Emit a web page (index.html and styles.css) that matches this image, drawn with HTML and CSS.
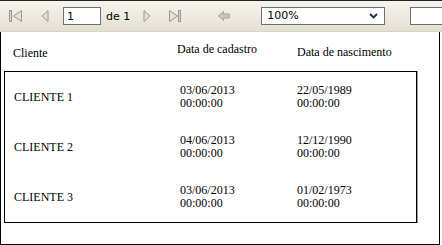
FILE: index.html
```html
<!DOCTYPE html>
<html>
<head>
<meta charset="utf-8">
<link rel="stylesheet" href="styles.css">
</head>
<body>
<div class="viewer">
  <div class="toolbar">
    <span class="btn btn-first"><svg width="14" height="14" viewBox="0 0 14 14"><rect x="0.5" y="1.5" width="2" height="11" fill="#d6d3c8" stroke="#9a9890"/><path d="M12.5 1.5 L4.5 7 L12.5 12.5 Z" fill="#e4e1d6" stroke="#9a9890"/></svg></span>
    <span class="btn btn-prev"><svg width="8" height="14" viewBox="0 0 8 14"><path d="M7 1.5 L1 7 L7 12.5 Z" fill="#e4e1d6" stroke="#9a9890"/></svg></span>
    <input class="page-input" type="text" value="1">
    <span class="of">de 1</span>
    <span class="btn btn-next"><svg width="8" height="14" viewBox="0 0 8 14"><path d="M1 1.5 L7 7 L1 12.5 Z" fill="#e4e1d6" stroke="#9a9890"/></svg></span>
    <span class="btn btn-last"><svg width="14" height="14" viewBox="0 0 14 14"><path d="M1.5 1.5 L9.5 7 L1.5 12.5 Z" fill="#e4e1d6" stroke="#9a9890"/><rect x="10.5" y="1.5" width="2" height="11" fill="#d6d3c8" stroke="#9a9890"/></svg></span>
    <span class="btn btn-back"><svg width="12" height="12" viewBox="0 0 12 12"><path d="M0.5 6 L5.5 1.5 L5.5 4 L11.5 4 L11.5 8 L5.5 8 L5.5 10.5 Z" fill="#c9c6bb" stroke="#a8a59c"/></svg></span>
    <span class="zoom-select"><span class="zoom-value">100%</span><svg class="chev" width="9" height="6" viewBox="0 0 9 6"><path d="M1 1 L4.5 4.5 L8 1" fill="none" stroke="#1c2a44" stroke-width="1.8"/></svg></span>
    <input class="find-input" type="text" value="">
  </div>
  <div class="report">
    <div class="head">
      <span class="h-cliente">Cliente</span>
      <span class="h-cad">Data de cadastro</span>
      <span class="h-nasc">Data de nascimento</span>
    </div>
    <div class="table">
      <div class="row">
        <span class="c-name">CLIENTE 1</span>
        <span class="c-date">03/06/2013<br>00:00:00</span>
        <span class="c-date">22/05/1989<br>00:00:00</span>
      </div>
      <div class="row">
        <span class="c-name">CLIENTE 2</span>
        <span class="c-date">04/06/2013<br>00:00:00</span>
        <span class="c-date">12/12/1990<br>00:00:00</span>
      </div>
      <div class="row">
        <span class="c-name">CLIENTE 3</span>
        <span class="c-date">03/06/2013<br>00:00:00</span>
        <span class="c-date">01/02/1973<br>00:00:00</span>
      </div>
    </div>
  </div>
</div>
</body>
</html>
```

FILE: styles.css
```css
html, body {
  margin: 0;
  padding: 0;
  background: #fff;
}
.viewer {
  width: 442px;
  height: 245px;
  overflow: hidden;
  font-family: "Liberation Serif", "Times New Roman", serif;
}
.toolbar {
  width: 442px;
  height: 30px;
  overflow: hidden;
  border-top: 1px solid #222;
  border-bottom: 1px solid #d8d5c8;
  background: linear-gradient(#f4f3ee, #ebe8dd 60%, #e3dfd0);
  display: flex;
  align-items: center;
  box-sizing: content-box;
  font-family: "DejaVu Sans", Verdana, sans-serif;
  font-size: 11px;
  color: #000;
  white-space: nowrap;
}
.toolbar > * {
  flex: none;
}
.btn {
  display: flex;
  align-items: center;
}
.btn-first { margin-left: 9px; }
.btn-prev { margin-left: 18px; }
.page-input {
  margin: 0 0 0 14px;
  width: 38px;
  height: 18px;
  box-sizing: border-box;
  border: 1px solid #6f6f6f;
  padding: 0 3px;
  font-family: "DejaVu Sans", Verdana, sans-serif;
  font-size: 11px;
  color: #000;
  background: #fff;
}
.of {
  margin-left: 5px;
}
.btn-next { margin-left: 13px; }
.btn-last { margin-left: 17px; }
.btn-back { margin-left: 36px; }
.zoom-select {
  margin-left: 31px;
  width: 124px;
  height: 18px;
  box-sizing: border-box;
  border: 1px solid #6f6f6f;
  background: #fff;
  display: flex;
  align-items: center;
  justify-content: space-between;
  padding: 0 6px 0 5px;
}
.zoom-value { line-height: 16px; }
.find-input {
  margin: 0 0 0 25px;
  width: 60px;
  height: 18px;
  box-sizing: border-box;
  border: 1px solid #6f6f6f;
  background: #fff;
  padding: 0;
}
.report {
  width: 440px;
  height: 213px;
  box-sizing: border-box;
  border-left: 1px solid #000;
  border-right: 1px solid #000;
  border-bottom: 1px solid #000;
  font-size: 12px;
  line-height: 13px;
  color: #000;
}
.head {
  height: 39px;
  display: grid;
  grid-template-columns: 164px 120px auto;
  padding-left: 12px;
}
.h-cliente { padding-top: 15px; }
.h-cad { padding-top: 11px; }
.h-nasc { padding-top: 14px; }
.table {
  margin-left: 3px;
  width: 413px;
  box-sizing: border-box;
  border: 1px solid #000;
  box-shadow: 1px 0 0 #9a9a9a;
}
.row {
  height: 50px;
  display: grid;
  grid-template-columns: 166px 117px auto;
  align-items: center;
  padding-left: 9px;
}
.c-name { padding-top: 1px; }
```
